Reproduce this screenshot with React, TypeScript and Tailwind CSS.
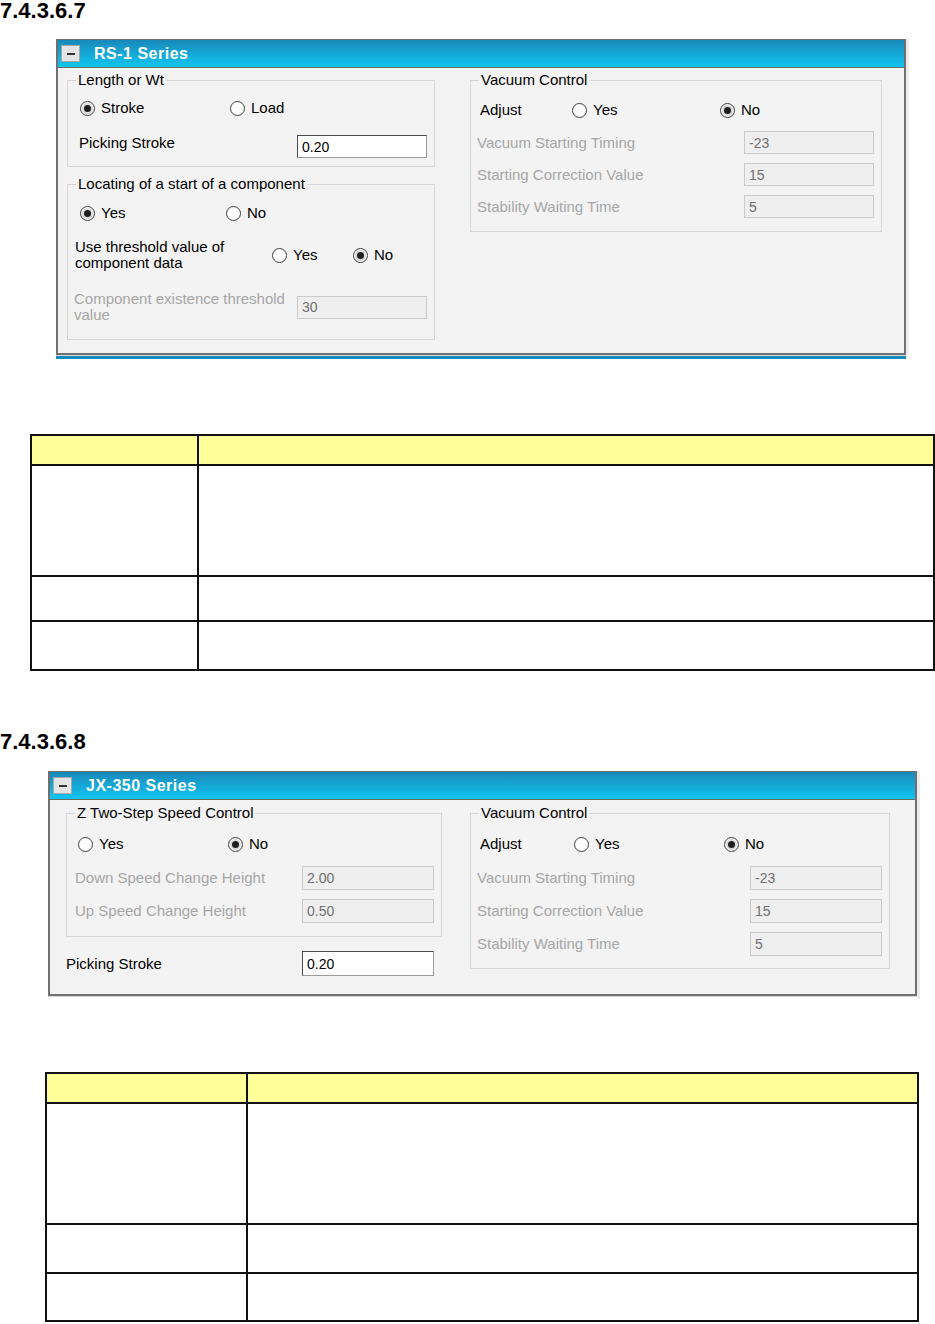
import React from 'react';

const font = "font-['Liberation_Sans',Arial,sans-serif]";

const Radio = ({ checked }: { checked?: boolean }) => (
  <span className="w-[15px] h-[15px] rounded-full border border-[#3c3c3c] bg-white flex items-center justify-center shrink-0">
    {checked && (
      <span className="w-[11px] h-[11px] rounded-full bg-[#dcdcdc] flex items-center justify-center">
        <span className="w-[7px] h-[7px] rounded-full bg-[#1e1e1e]" />
      </span>
    )}
  </span>
);

const Option = ({ label, checked, w }: { label: string; checked?: boolean; w?: string }) => (
  <div className={`flex items-center gap-[6px] h-[20px] ${w || ''}`}>
    <Radio checked={checked} />
    <span className="text-[15px] leading-[16px] text-black">{label}</span>
  </div>
);

const Field = ({ value, disabled, w = 'w-[130px]', h = 'h-[23px]' }: { value: string; disabled?: boolean; w?: string; h?: string }) => (
  <div
    className={`${w} ${h} flex items-center pl-[4px] text-[14px] leading-none shrink-0 ${
      disabled
        ? 'bg-[#efefef] border border-[#cacaca] text-[#707070]'
        : 'bg-white border border-[#4a4a4a] border-b-[#9a9a9a] border-r-[#9a9a9a] text-black'
    }`}
  >
    {value}
  </div>
);

const Group = ({ title, className, children }: { title: string; className?: string; children: React.ReactNode }) => (
  <fieldset className={`border border-[#d6d6d6] ${className || ''}`}>
    <legend className="ml-[8px] px-[2px] text-[15px] leading-[16px] text-black">{title}</legend>
    {children}
  </fieldset>
);

const TitleBar = ({ title }: { title: string }) => (
  <div className="h-[28px] flex items-center bg-gradient-to-b from-[#1889b9] to-[#10c6f1] border-b border-[#6a6a6a]">
    <div className="ml-[3px] w-[19px] h-[17px] bg-[#e4e4e4] border border-[#a8a8a8] flex items-center justify-center">
      <span className="w-[8px] h-[2px] bg-[#333]" />
    </div>
    <span className="ml-[14px] text-white font-bold text-[16px] tracking-[0.5px] leading-none">{title}</span>
  </div>
);

const DocTable = ({ col, rows, width }: { col: string; rows: string[]; width: string }) => (
  <table className={`${width} border-collapse table-fixed`}>
    <colgroup>
      <col className={col} />
      <col />
    </colgroup>
    <tbody>
      {rows.map((h, i) => (
        <tr key={i} className={h}>
          <td className={`border-2 border-[#111] ${i === 0 ? 'bg-[#ffff99]' : 'bg-white'}`} />
          <td className={`border-2 border-[#111] ${i === 0 ? 'bg-[#ffff99]' : 'bg-white'}`} />
        </tr>
      ))}
    </tbody>
  </table>
);

export default function App() {
  return (
    <div className={`w-[935px] h-[1324px] bg-white overflow-hidden ${font}`}>
      <h2 className="h-[39px] text-[22px] font-bold leading-[22px] text-black">7.4.3.6.7</h2>

      {/* RS-1 Series panel */}
      <div className="ml-[56px] flex">
        <div className="w-[850px]">
          <div className="border-2 border-b-0 border-[#707070] border-t-[1px]">
            <TitleBar title="RS-1 Series" />
            <div className="bg-[#f3f3f3] flex pl-[9px] pt-[4px] h-[285px]">
              <div className="w-[368px]">
                <Group title="Length or Wt" className="pb-[8px]">
                  <div className="flex mt-[10px] pl-[12px]">
                    <Option label="Stroke" checked w="w-[150px]" />
                    <Option label="Load" />
                  </div>
                  <div className="flex items-center justify-between mt-[17px] pl-[11px] pr-[7px]">
                    <span className="text-[15px] leading-[16px] -mt-[8px]">Picking Stroke</span>
                    <Field value="0.20" />
                  </div>
                </Group>
                <Group title="Locating of a start of a component" className="mt-[9px] pb-[16px]">
                  <div className="flex mt-[11px] pl-[12px]">
                    <Option label="Yes" checked w="w-[146px]" />
                    <Option label="No" />
                  </div>
                  <div className="flex items-center mt-[16px] pl-[7px]">
                    <span className="w-[197px] text-[15px] leading-[16px]">
                      Use threshold value of
                      <br />
                      component data
                    </span>
                    <Option label="Yes" w="w-[81px]" />
                    <Option label="No" checked />
                  </div>
                  <div className="flex items-center justify-between mt-[20px] pl-[6px] pr-[7px]">
                    <span className="text-[15px] leading-[16px] text-[#a6a6a6]">
                      Component existence threshold
                      <br />
                      value
                    </span>
                    <Field value="30" disabled />
                  </div>
                </Group>
              </div>
              <div className="w-[412px] ml-[35px]">
                <Group title="Vacuum Control" className="pb-[13px]">
                  <div className="flex items-center mt-[12px] pl-[9px]">
                    <span className="w-[92px] text-[15px] leading-[16px]">Adjust</span>
                    <Option label="Yes" w="w-[148px]" />
                    <Option label="No" checked />
                  </div>
                  <div className="flex flex-col gap-[9px] mt-[11px] pl-[6px] pr-[7px]">
                    {[
                      ['Vacuum Starting Timing', '-23'],
                      ['Starting Correction Value', '15'],
                      ['Stability Waiting Time', '5'],
                    ].map(([l, v]) => (
                      <div key={l} className="flex items-center justify-between">
                        <span className="text-[15px] leading-[16px] text-[#a6a6a6]">{l}</span>
                        <Field value={v} disabled />
                      </div>
                    ))}
                  </div>
                </Group>
              </div>
            </div>
          </div>
          <div className="h-[2px] bg-[#707070]" />
          <div className="h-[1px] bg-[#d8d8d8]" />
          <div className="h-[3px] bg-[#168bbf]" />
        </div>
        <div className="w-[3px] h-[316px] bg-[#ececec]" />
      </div>

      <div className="h-[75px]" />
      <div className="ml-[30px]">
        <DocTable width="w-[905px]" col="w-[167px]" rows={['h-[30px]', 'h-[111px]', 'h-[45px]', 'h-[49px]']} />
      </div>

      <h2 className="mt-[60px] h-[40px] text-[22px] font-bold leading-[22px] text-black">7.4.3.6.8</h2>

      {/* JX-350 Series panel */}
      <div className="ml-[48px] flex">
        <div className="w-[869px]">
          <div className="border-2 border-[#707070] border-t-[1px]">
            <TitleBar title="JX-350 Series" />
            <div className="bg-[#f3f3f3] flex pl-[16px] pt-[5px] h-[194px]">
              <div className="w-[376px]">
                <Group title="Z Two-Step Speed Control" className="pb-[13px]">
                  <div className="flex mt-[13px] pl-[11px]">
                    <Option label="Yes" w="w-[150px]" />
                    <Option label="No" checked />
                  </div>
                  <div className="flex flex-col gap-[9px] mt-[12px] pl-[8px] pr-[7px]">
                    {[
                      ['Down Speed Change Height', '2.00'],
                      ['Up Speed Change Height', '0.50'],
                    ].map(([l, v]) => (
                      <div key={l} className="flex items-center justify-between">
                        <span className="text-[15px] leading-[16px] text-[#a6a6a6]">{l}</span>
                        <Field value={v} disabled w="w-[132px]" h="h-[24px]" />
                      </div>
                    ))}
                  </div>
                </Group>
                <div className="flex items-center justify-between mt-[14px] pr-[8px]">
                  <span className="text-[15px] leading-[16px]">Picking Stroke</span>
                  <Field value="0.20" w="w-[132px]" h="h-[25px]" />
                </div>
              </div>
              <div className="w-[420px] ml-[28px]">
                <Group title="Vacuum Control" className="pb-[12px]">
                  <div className="flex items-center mt-[13px] pl-[9px]">
                    <span className="w-[94px] text-[15px] leading-[16px]">Adjust</span>
                    <Option label="Yes" w="w-[150px]" />
                    <Option label="No" checked />
                  </div>
                  <div className="flex flex-col gap-[9px] mt-[12px] pl-[6px] pr-[7px]">
                    {[
                      ['Vacuum Starting Timing', '-23'],
                      ['Starting Correction Value', '15'],
                      ['Stability Waiting Time', '5'],
                    ].map(([l, v]) => (
                      <div key={l} className="flex items-center justify-between">
                        <span className="text-[15px] leading-[16px] text-[#a6a6a6]">{l}</span>
                        <Field value={v} disabled w="w-[132px]" h="h-[24px]" />
                      </div>
                    ))}
                  </div>
                </Group>
              </div>
            </div>
          </div>
          <div className="h-[1px] bg-[#d8d8d8]" />
        </div>
        <div className="w-[3px] h-[228px] bg-[#ececec]" />
      </div>

      <div className="h-[73px]" />
      <div className="ml-[45px]">
        <DocTable width="w-[874px]" col="w-[201px]" rows={['h-[30px]', 'h-[121px]', 'h-[49px]', 'h-[48px]']} />
      </div>
    </div>
  );
}
